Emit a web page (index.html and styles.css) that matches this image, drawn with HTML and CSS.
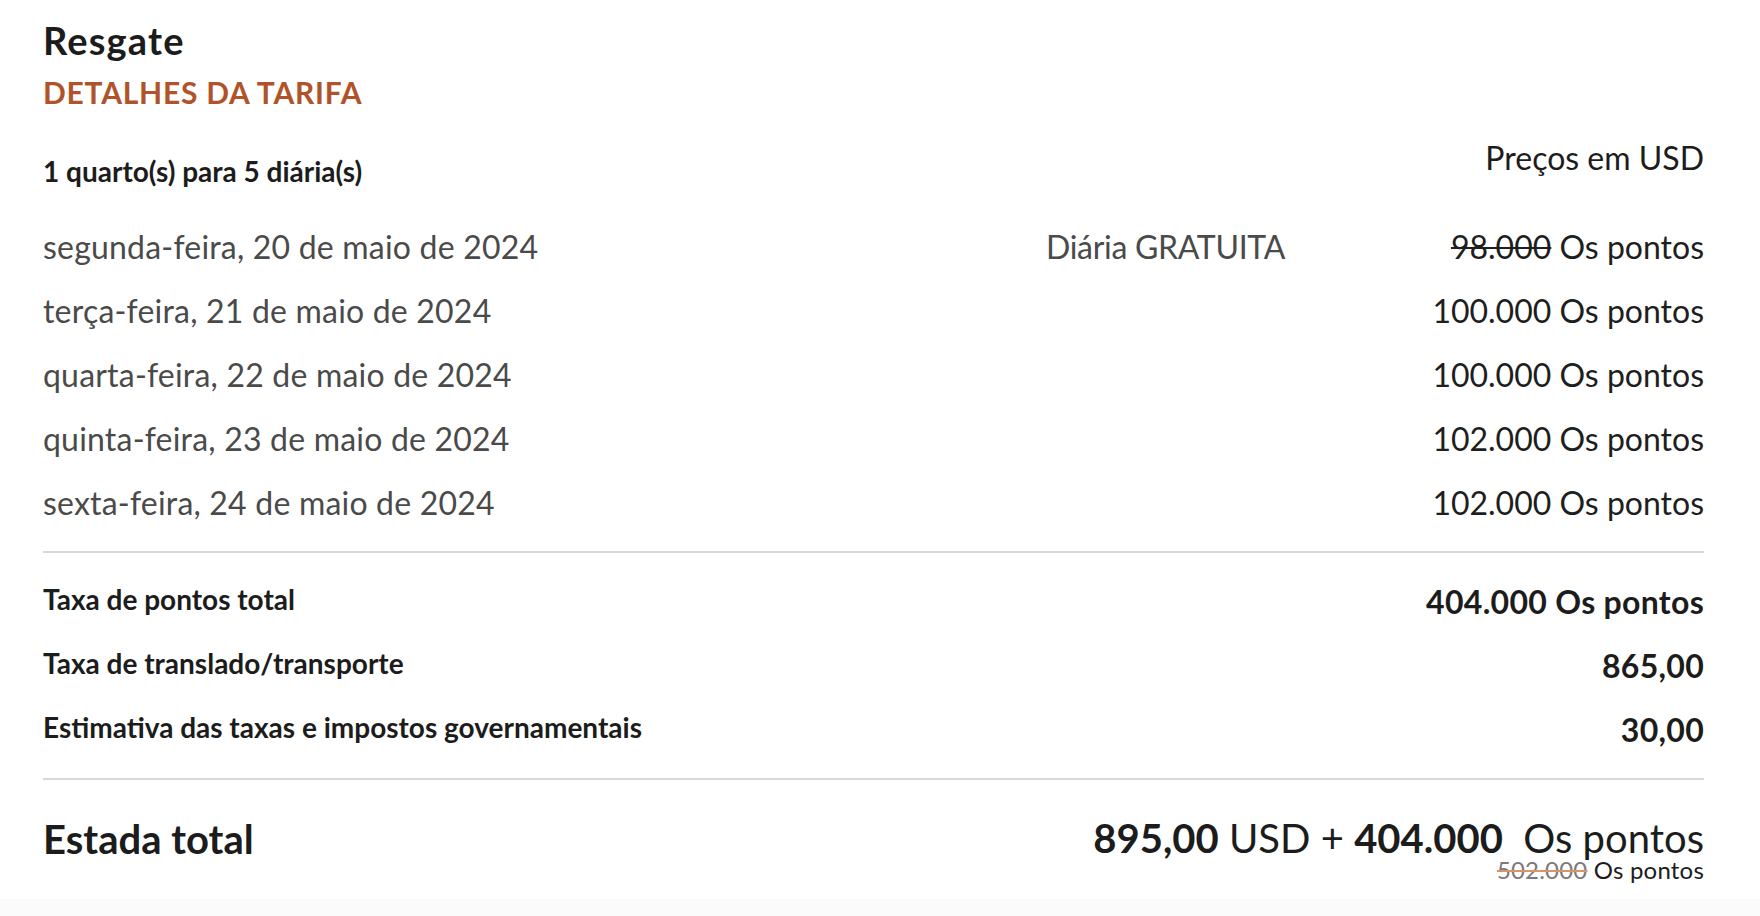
FILE: index.html
```html
<!DOCTYPE html>
<html lang="pt">
<head>
<meta charset="utf-8">
<title>Resgate</title>
<link rel="stylesheet" href="styles.css">
</head>
<body>
<main class="page">
  <h1 class="title">Resgate</h1>
  <h2 class="subtitle">DETALHES DA TARIFA</h2>

  <div class="summary">
    <div class="rooms">1 quarto(s) para 5 diária(s)</div>
    <div class="currency">Preços em USD</div>
  </div>

  <div class="nights">
    <div class="night">
      <span class="date">segunda-feira, 20 de maio de 2024</span>
      <span class="free">Diária GRATUITA</span>
      <span class="price"><s class="strike">98.000</s> Os pontos</span>
    </div>
    <div class="night">
      <span class="date">terça-feira, 21 de maio de 2024</span>
      <span class="free"></span>
      <span class="price">100.000 Os pontos</span>
    </div>
    <div class="night">
      <span class="date">quarta-feira, 22 de maio de 2024</span>
      <span class="free"></span>
      <span class="price">100.000 Os pontos</span>
    </div>
    <div class="night">
      <span class="date">quinta-feira, 23 de maio de 2024</span>
      <span class="free"></span>
      <span class="price">102.000 Os pontos</span>
    </div>
    <div class="night">
      <span class="date">sexta-feira, 24 de maio de 2024</span>
      <span class="free"></span>
      <span class="price">102.000 Os pontos</span>
    </div>
  </div>

  <div class="fees">
    <div class="fee">
      <span class="fee-label">Taxa de pontos total</span>
      <span class="fee-value">404.000 Os pontos</span>
    </div>
    <div class="fee">
      <span class="fee-label">Taxa de translado/transporte</span>
      <span class="fee-value">865,00</span>
    </div>
    <div class="fee">
      <span class="fee-label">Estimativa das taxas e impostos governamentais</span>
      <span class="fee-value">30,00</span>
    </div>
  </div>

  <div class="total">
    <div class="total-label">Estada total</div>
    <div class="total-amount">
      <div class="total-main"><b>895,00</b> USD + <b>404.000</b>&nbsp; Os pontos</div>
      <div class="total-old"><s class="old-strike">502.000</s> Os pontos</div>
    </div>
  </div>
</main>
<div class="footer-band"></div>
</body>
</html>
```

FILE: styles.css
```css
* { box-sizing: border-box; }

html, body {
  margin: 0;
  padding: 0;
  background: #ffffff;
}

body {
  font-family: Lato, "Noto Sans", sans-serif;
  color: #1e1e1e;
  height: 916px;
  overflow: hidden;
  display: flex;
  flex-direction: column;
}

.page {
  padding: 18px 56px 0 43px;
  flex: 1;
}

.title {
  margin: 0;
  font-size: 38px;
  font-weight: 700;
  letter-spacing: 1.2px;
  line-height: 44px;
  color: #1c1c1c;
}

.subtitle {
  margin: 10px 0 0;
  font-size: 30px;
  font-weight: 700;
  letter-spacing: 0.75px;
  line-height: 40px;
  color: #b0532a;
}

.summary {
  display: flex;
  justify-content: space-between;
  align-items: flex-start;
  margin-top: 29px;
}

.rooms {
  font-size: 28px;
  font-weight: 700;
  line-height: 30px;
  margin-top: 15px;
  color: #1c1c1c;
}

.currency {
  font-size: 32px;
  line-height: 34px;
  color: #1c1c1c;
}

.nights {
  margin-top: 28px;
  padding-bottom: 17px;
  border-bottom: 2px solid #d8d8d8;
}

.night {
  display: grid;
  grid-template-columns: 1003px 1fr auto;
  align-items: center;
  height: 64px;
  font-size: 32px;
}

.date { color: #4a4a4a; letter-spacing: 0.2px; }
.free { color: #4a4a4a; letter-spacing: -0.3px; }
.price { color: #1e1e1e; text-align: right; }
.strike { text-decoration-thickness: 2px; }

.fees {
  padding: 16px 0 17px;
  border-bottom: 2px solid #d8d8d8;
}

.fee {
  display: flex;
  justify-content: space-between;
  align-items: center;
  height: 64px;
}

.fee-label {
  font-size: 28px;
  font-weight: 700;
  color: #1c1c1c;
  margin-top: -5px;
}

.fee-value {
  font-size: 32px;
  font-weight: 700;
  letter-spacing: 0.3px;
  color: #1c1c1c;
}

.total {
  display: flex;
  justify-content: space-between;
  align-items: flex-start;
  padding-top: 35px;
}

.total-label {
  font-size: 40px;
  font-weight: 700;
  line-height: 48px;
  color: #1c1c1c;
}

.total-amount {
  text-align: right;
}

.total-main {
  font-size: 40px;
  line-height: 46px;
  color: #1c1c1c;
}

.total-main b { font-weight: 700; }

.total-old {
  font-size: 24px;
  letter-spacing: 0.2px;
  line-height: 24px;
  margin-top: -3px;
  color: #1c1c1c;
}

.old-strike {
  color: #7a7a7a;
  text-decoration-color: #d9946e;
  text-decoration-thickness: 2px;
}

.footer-band {
  height: 17px;
  background: #fbfbfb;
}
```
